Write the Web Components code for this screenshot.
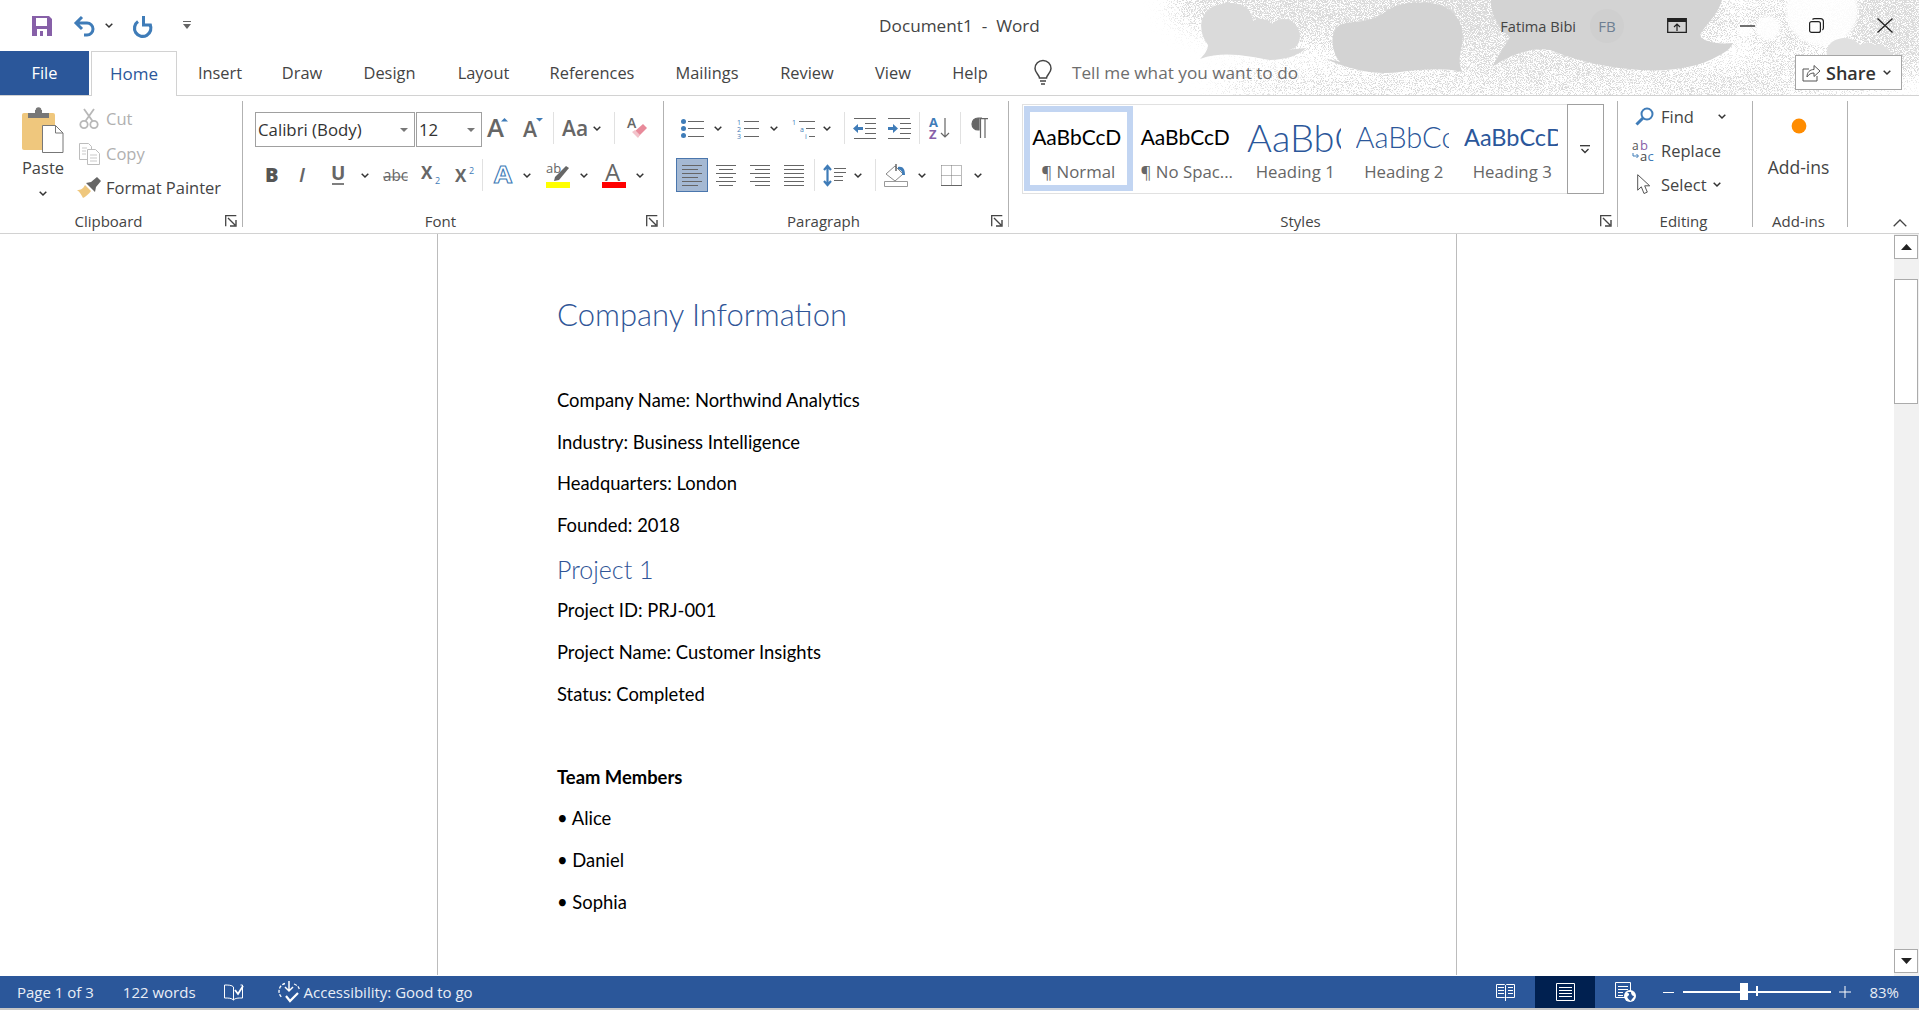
<!DOCTYPE html>
<html lang="en">
<head>
<meta charset="utf-8">
<title>Document1 - Word</title>
<style>
  html, body { margin: 0; height: 100%; overflow: hidden; background: #fff; }
  body { font-family: "Open Sans", "Noto Sans", sans-serif; }
</style>
</head>
<body>
<word-app>
  <word-titlebar slot="title"></word-titlebar>
  <word-tabs slot="tabs"></word-tabs>
  <word-ribbon slot="ribbon"></word-ribbon>
  <word-document slot="doc">
    <doc-line kind="title">Company Information</doc-line>
    <doc-line>Company Name: Northwind Analytics</doc-line>
    <doc-line>Industry: Business Intelligence</doc-line>
    <doc-line>Headquarters: London</doc-line>
    <doc-line>Founded: 2018</doc-line>
    <doc-line kind="head">Project 1</doc-line>
    <doc-line>Project ID: PRJ-001</doc-line>
    <doc-line>Project Name: Customer Insights</doc-line>
    <doc-line>Status: Completed</doc-line>
    <doc-line></doc-line>
    <doc-line kind="bold">Team Members</doc-line>
    <doc-line>• Alice</doc-line>
    <doc-line>• Daniel</doc-line>
    <doc-line>• Sophia</doc-line>
  </word-document>
  <word-statusbar slot="status"></word-statusbar>
</word-app>

<script>
const UI_FONT = `"Open Sans", "Noto Sans", sans-serif`;
const G = "#666";
const B = "#3f7cb8";
const chevPath = `<path d="M.7.7 4 4l3.3-3.3" fill="none" stroke="#333" stroke-width="1.5"/>`;
const lines = (x, w, ys, c = G) => ys.map(y => `<path d="M${x} ${y + .5}h${w}" stroke="${c}"/>`).join("");
const glyph = (x, y, size, weight, fill, txt, extra = "") =>
  `<text x="${x}" y="${y}" font-size="${size}" font-weight="${weight}" fill="${fill}" font-family='"Open Sans",sans-serif' ${extra}>${txt}</text>`;

// name: [width, height, markup]
const ICONS = {
  chev: [8, 5, chevPath],
  save: [20, 20, `<path fill="#8760a8" d="M0 0h17l3 3v17H0z"/><path fill="#fff" d="M4 2h11v8H4zM5 13h10v7H5z"/><path fill="#8760a8" d="M8 15h3v5H8z"/>`],
  undo: [22, 21, `<path d="M9 2 3 8l6 6M3 8h11a6 6 0 0 1 0 12h-3" fill="none" stroke="${B}" stroke-width="3"/>`],
  redo: [20, 20, `<path d="M6 5.500a8.200 8.200 0 1 0 12 3" fill="none" stroke="${B}" stroke-width="3.200"/><path d="M11.500 0v9H19.500" fill="none" stroke="${B}" stroke-width="3"/>`],
  qat: [8, 9, `<path d="M0 .5h8" stroke="#666"/><path fill="#666" d="M0 3h8L4 8z"/>`],
  bulb: [20, 24, `<path d="M6.500 17c0-3-4.500-5-4.500-9.500a8 8 0 0 1 16 0c0 4.500-4.500 6.500-4.500 9.500zM7 20h6M8 23h4" fill="none" stroke="#444" stroke-width="1.500"/>`],
  share: [19, 19, `<path d="M7 6H1v12h14v-5" fill="none" stroke="#555"/><path d="M5 14c0-5 3-7.500 7-7.500V2.500l6 5.500-6 5.500V10c-3 0-5 1-7 4z" fill="#fff" stroke="#555"/>`],
  ribbonDisplay: [20, 15, `<path d="M.7.7h18.600v13.600H.7z" fill="none" stroke="#222" stroke-width="1.300"/><path fill="#222" d="M1 1h18v3H1z"/><path d="M10 13V6.500M7 9l3-3 3 3" fill="none" stroke="#222" stroke-width="1.200"/>`],
  minimize: [15, 2, `<path d="M0 1h15" stroke="#222" stroke-width="1.300"/>`],
  restore: [15, 15, `<rect x=".6" y="3.600" width="10.800" height="10.800" rx="2" fill="none" stroke="#222" stroke-width="1.200"/><path d="M3.500 1.500c.5-.6 1-.9 2-.9h6c1.700 0 2.900 1.200 2.900 2.900v6.500c0 1-.4 1.500-1 2" fill="none" stroke="#222" stroke-width="1.200"/>`],
  close: [16, 15, `<path d="m.5.500 15 14M15.500.500l-15 14" stroke="#222" stroke-width="1.300"/>`],
  paste: [42, 46, `<rect y="6" width="33" height="37" rx="2" fill="#efc77d"/><path fill="#777" d="M6 6h21v5H6zM13 3h7v4h-7z"/><circle cx="16.500" cy="3" r="2.800" fill="#777"/><path d="M20.500 18.500h13l7.500 7.500v19.500H20.500z" fill="#fff" stroke="#777"/><path d="M33.500 18.500V26H41" fill="none" stroke="#777"/>`],
  cut: [20, 21, `<g fill="none" stroke="#b8b8b8" stroke-width="1.800"><circle cx="5" cy="16.500" r="3.700"/><circle cx="15" cy="16.500" r="3.700"/><path d="M6.500 13 15 1M13.500 13 5 1"/></g>`],
  copy: [21, 22, `<g fill="#fff" stroke="#bdbdbd"><path d="M.5.500h9l3 3v13H.5z"/><path d="M8.500 6.500h8l4 4v11h-12z"/></g><path d="M3 5h5M3 8h4M3 11h4M11 12h7M11 15h7M11 18h7" stroke="#c9c9c9"/>`],
  painter: [25, 21, `<path fill="#efc77d" d="M0 13c4 0 6-1 8-5l6 6c-2 3-6 6-8 7-1-2-3-6-6-8z"/><path fill="#666" d="m9 6 5-1 6-5 4 4-5 6-1 5z"/>`],
  launcher: [12, 12, `<path d="M.7 11.300V.700h10.600" fill="none" stroke="#444" stroke-width="1.300"/><path d="M3 3l7 7M11 5v6H5" fill="none" stroke="#444" stroke-width="1.400"/>`],
  grow: [24, 20, glyph(0, 19, 26, 600, G, "A", `textLength="17" lengthAdjust="spacingAndGlyphs"`) + `<path fill="${B}" d="M14 3.500 17.500 0 21 3.500z"/>`],
  shrink: [22, 20, glyph(0, 19, 21, 600, G, "A", `textLength="14" lengthAdjust="spacingAndGlyphs"`) + `<path fill="${B}" d="M13 0h7l-3.500 3.500z"/>`],
  changeCase: [25, 18, glyph(0, 17, 21, 600, G, "Aa")],
  eraser: [20, 22, glyph(0, 11, 14, 600, G, "A") + `<path fill="#e88a9a" d="m7 15 9-8 4 4-9 9z"/><path fill="#f3c3cb" d="m5 15 3-2 5 5-2 3z"/>`],
  bold: [14, 16, glyph(0, 15, 20, 800, "#555", "B")],
  italic: [12, 16, glyph(0, 15, 20, 600, "#666", "I", `font-style="italic"`)],
  underline: [14, 19, glyph(0, 14, 19, 700, "#666", "U") + `<path d="M1 18h12" stroke="#555" stroke-width="1.500"/>`],
  strike: [25, 15, glyph(0, 13, 16, 400, "#666", "abc", `textLength="25" lengthAdjust="spacingAndGlyphs"`) + `<path d="M0 9h25" stroke="#666"/>`],
  sub: [20, 18, glyph(0, 13, 17, 700, "#666", "X") + glyph(14, 18, 9, 400, B, "2")],
  sup: [20, 18, glyph(0, 16, 17, 700, "#666", "X") + glyph(14, 8, 9, 400, B, "2")],
  textEffect: [18, 18, glyph(0, 17, 23, 700, "#fff", "A", `stroke="${B}" stroke-width="1" textLength="18" lengthAdjust="spacingAndGlyphs"`)],
  highlight: [24, 25, glyph(0, 10, 13, 400, G, "ab") + `<path fill="${G}" d="m9 14 11-11 3 2-10 12-5 1z"/><path fill="#ff0" d="M0 19h24v6H0z"/>`],
  fontColor: [24, 25, glyph(3, 18, 24, 500, G, "A") + `<path fill="#f00" d="M0 19h24v6H0z"/>`],
  bullets: [23, 19, `<circle cx="2.500" cy="2.500" r="2.500" fill="${B}"/><circle cx="2.500" cy="9.500" r="2.500" fill="${B}"/><circle cx="2.500" cy="16.500" r="2.500" fill="${B}"/>` + lines(7, 16, [2, 9, 17])],
  numbered: [23, 19, glyph(0, 6, 7, 400, B, "1") + glyph(0, 13, 7, 400, B, "2") + glyph(0, 20, 7, 400, B, "3") + lines(7, 15, [2, 9, 17])],
  multilevel: [23, 19, glyph(0, 6, 7, 400, B, "1") + glyph(8, 13, 7, 400, B, "a") + glyph(13, 20, 7, 400, B, "i") + lines(7, 16, [2]) + lines(14, 9, [9]) + lines(17, 6, [17])],
  outdent: [23, 21, lines(1, 22, [0, 20]) + lines(12, 11, [5, 10, 15]) + `<path fill="${B}" d="M0 10.500 5 6v3h5v3H5v3z"/>`],
  indent: [23, 21, lines(0, 22, [0, 20]) + lines(12, 11, [5, 10, 15]) + `<path fill="${B}" d="M10 10.500 5 6v3H0v3h5v3z"/>`],
  sort: [23, 22, glyph(0, 10, 13, 700, B, "A") + glyph(0, 22, 13, 700, "#8760a8", "Z") + `<path d="M16 1v19M12 16l4 4 4-4" fill="none" stroke="#666" stroke-width="1.200"/>`],
  pilcrow: [16, 20, `<path d="M10 0H6a6 6 0 0 0 0 12h1V0zM8.500 0v20M13 0v20M8 .7h8" fill="#666" stroke="#666" stroke-width="1.200"/>`],
  alignLeft: [20, 21, lines(0, 20, [0, 8, 16]) + lines(0, 16, [4, 12, 20])],
  alignCenter: [20, 21, lines(0, 20, [0, 8, 16]) + lines(3, 14, [4, 12, 20])],
  alignRight: [20, 21, lines(0, 20, [0, 8, 16]) + lines(5, 15, [4, 12, 20])],
  justify: [20, 21, lines(0, 20, [0, 4, 8, 12, 16, 20])],
  lineSpacing: [23, 23, `<path d="M4.500 2v19M1 6l3.500-4L8 6M1 17l3.500 4L8 17" fill="none" stroke="${B}" stroke-width="2.200"/>` + lines(11, 12, [4, 8]) + lines(11, 9, [12, 16])],
  shading: [24, 24, `<path d="M2 11l9-8 8 8-8 7z" fill="#fff" stroke="#888"/><path d="M12 1v7" stroke="#666" stroke-width="1.500"/><path d="M14 4c5-1 7 2 7 8h-3c1-3-1-5-4-6z" fill="${B}"/><path d="M.5 18.500h23v5H.5z" fill="#fff" stroke="#999"/>`],
  borders: [21, 21, `<path d="M.5.500h20M.5 10.500h20M.5.500v20M10.500.500v20M20.500.500v20" fill="none" stroke="#777" stroke-dasharray="1 1"/><path d="M0 20.500h21" stroke="#666"/>`],
  find: [19, 19, `<circle cx="12" cy="7" r="5.500" fill="none" stroke="${B}" stroke-width="2"/><path d="M8 11 1.500 17.500" stroke="${B}" stroke-width="3"/>`],
  replace: [24, 20, glyph(0, 9, 12, 400, "#555", "a") + glyph(8, 9, 13, 500, "#8760a8", "b") + glyph(8, 20, 13, 400, "#444", "a") + glyph(15.500, 20, 13, 400, B, "c") + `<path d="M1 12v3h5M4.500 13l2 2-2 2" fill="none" stroke="${B}"/>`],
  select: [14, 22, `<path d="M.7.7v15.500l3.600-3.400L7 19.500l3.300-1.400-2.600-6.300h5z" fill="#fff" stroke="#555"/>`],
  dot: [16, 16, `<defs><filter id="soft"><feGaussianBlur stdDeviation=".5"/></filter></defs><circle cx="8" cy="8" r="7.400" fill="#ff8c00" filter="url(#soft)"/>`],
  collapse: [14, 8, `<path d="M.7 7.300 7 1l6.300 6.300" fill="none" stroke="#444" stroke-width="1.300"/>`],
  moreStyles: [10, 9, `<path d="M0 .7h10" stroke="#333" stroke-width="1.300"/><path d="m1.500 4 3.500 3.500L8.500 4" fill="none" stroke="#333" stroke-width="1.300"/>`],
  triDown: [8, 4, `<path fill="#777" d="M0 0h8L4 4z"/>`],
  scrollUp: [11, 6, `<path fill="#222" d="M0 6 5.500 0 11 6z"/>`],
  scrollDown: [11, 6, `<path fill="#222" d="M0 0h11L5.500 6z"/>`],
  proof: [20, 17, `<path d="M9.500 3C8 1 4 1 .5 1v13c4 0 7 0 9 2 2-2 4-2 9-2V1h-2M9.500 3v13" fill="none" stroke="#fff"/><path d="m11 6 3 4 5-8" fill="none" stroke="#fff" stroke-width="1.800"/>`],
  a11y: [23, 22, `<path d="M7 2.500a8 8 0 0 0-3 14M16 3c3 1 5 3 5.500 6" fill="none" stroke="#fff" stroke-width="1.300" stroke-dasharray="3 1.500"/><path d="M11 0v10M7 6l4 4 4-4" fill="none" stroke="#fff" stroke-width="1.500"/><path d="m8 15 4 5 8-8" fill="none" stroke="#fff" stroke-width="2.200"/>`],
  readMode: [19, 18, `<path d="M.5 1.500h8l1 1 1-1h8v13h-8l-1 1-1-1h-8zM9.500 2.500V18" fill="none" stroke="#fff"/>` + lines(2, 6, [4, 7, 10], "#fff") + lines(12, 5, [4, 7, 10], "#fff")],
  printLayout: [19, 18, `<path d="M.5.500h18v17H.5z" fill="none" stroke="#fff"/>` + lines(3, 13, [4, 7, 10, 13], "#fff")],
  webLayout: [21, 20, `<path d="M.5.500h15v15H.5z" fill="none" stroke="#fff"/>` + lines(3, 10, [4, 7], "#fff") + lines(3, 5, [10, 13], "#fff") + `<circle cx="15" cy="14" r="6" fill="#fff"/><path d="M12 10c2 1 3 3 1 4s1 4 3 5c0-2 3-3 3-5-2 0-3-2-3-4z" fill="#2b579a"/>`],
};

class ToolBtn extends HTMLElement {
  connectedCallback() {
    const name = this.getAttribute("name");
    const [w, h, body] = ICONS[name] || [0, 0, ""];
    const cell = this.getAttribute("w");
    const ml = this.getAttribute("ml") || 0;
    this.attachShadow({ mode: "open" }).innerHTML = `
      <style>
        :host {
          display: flex; align-items: center; justify-content: center; flex: none;
          ${cell ? `width: ${cell}px;` : ""} margin-left: ${ml}px;
          box-sizing: border-box;
        }
        :host([active]) { background: #a5b9d3; border: 1px solid #4a76ad; height: 34px; }
        svg { display: block; overflow: visible; }
      </style>
      <svg width="${w}" height="${h}" viewBox="0 0 ${w} ${h}">${body}</svg>`;
  }
}

class RbSep extends HTMLElement {
  constructor() {
    super();
    this.attachShadow({ mode: "open" }).innerHTML = `
      <style>:host { display: block; flex: none; width: 1px; height: 32px; background: #e1e1e1; }</style>`;
  }
}

class WordApp extends HTMLElement {
  constructor() {
    super();
    this.attachShadow({ mode: "open" }).innerHTML = `
      <style>
        :host {
          display: grid; position: relative; isolation: isolate;
          grid-template-rows: 51px 45px 138px 742px 34px;
          width: 1919px; height: 1010px; overflow: hidden; background: #fff;
        }
        .art { position: absolute; left: 1130px; top: 0; z-index: -1; display: block; }
      </style>
      <svg class="art" width="789" height="95" viewBox="1130 0 789 95">
        <defs>
          <filter id="speck" filterUnits="userSpaceOnUse" x="1130" y="0" width="789" height="95" color-interpolation-filters="sRGB">
            <feGaussianBlur in="SourceAlpha" stdDeviation="14" result="density"/>
            <feTurbulence type="fractalNoise" baseFrequency="1.15" numOctaves="2" seed="7"/>
            <feColorMatrix type="matrix" values="0 0 0 0 0  0 0 0 0 0  0 0 0 0 0  3.600 0 0 0 -1.300" result="noise"/>
            <feComposite in="density" in2="noise" operator="arithmetic" k1="0" k2="1" k3="1" k4="-1"/>
            <feComponentTransfer result="mask"><feFuncA type="linear" slope="2.500" intercept="0"/></feComponentTransfer>
            <feFlood flood-color="#dadada"/>
            <feComposite in2="mask" operator="in"/>
          </filter>
          <filter id="halo"><feGaussianBlur stdDeviation="1.500"/></filter>
        </defs>
        <g filter="url(#speck)">
          <ellipse cx="1360" cy="5" rx="190" ry="42" fill-opacity=".8"/>
          <ellipse cx="1560" cy="20" rx="180" ry="50" fill-opacity=".7"/>
          <ellipse cx="1500" cy="85" rx="290" ry="22" fill-opacity=".55"/>
          <ellipse cx="1790" cy="25" rx="50" ry="40" fill-opacity=".58"/>
          <ellipse cx="1900" cy="15" rx="60" ry="60" fill-opacity=".85"/>
          <ellipse cx="1780" cy="85" rx="120" ry="20" fill-opacity=".48"/>
        </g>
        <g fill="#fff" filter="url(#halo)" opacity=".9">
          <circle cx="1822" cy="10" r="36"/>
          <circle cx="1768" cy="28" r="12"/>
          <circle cx="1745" cy="30" r="7"/>
        </g>
        <g fill="#d3d3d3">
          <path fill="#dadada" d="M1208 45C1195 28 1200 5 1228 3c17-1 24 9 25 18 7-5 15-1 19 3 8-9 26-6 28 11 0 10-5 15-15 15l21-2c-6 7-21 12-36 12-20-3-45-10-70-1 4-4 8-9 8-14z"/>
          <path d="M1340 62c-10-12-10-32 0-37 10-5 30-1 45-13 10-9 35-12 55-7 20 7 25 25 22 40-2 10-4 17 0 27-17-4-37-3-62 0-20 3-45 0-74-13 6 1 11 2 14 3z"/>
          <path d="M1491 0c-1 15 9 30 19 37-7 11-13 21-18 30 18-12 38-20 58-17 30 12 60 18 90 20 30 2 60-3 78-14 8-4 13-8 15-13-18 2-33-3-33-8 5-10 18-20 22-35z"/>
          <path fill="#e0e0e0" d="M1827 56c-2-12 8-18 18-18 8 0 12 4 15 7 5-3 11-3 15 0 6-2 14 2 18 11z"/>
        </g>
      </svg>
      <slot name="title"></slot>
      <slot name="tabs"></slot>
      <slot name="ribbon"></slot>
      <slot name="doc"></slot>
      <slot name="status"></slot>`;
  }
}

class WordTitlebar extends HTMLElement {
  constructor() {
    super();
    this.attachShadow({ mode: "open" }).innerHTML = `
      <style>
        :host {
          display: grid; grid-template-columns: 1fr auto 1fr; align-items: center;
          height: 51px; font-family: ${UI_FONT}; color: #444; font-size: 14.6px;
        }
        .qat { display: flex; align-items: center; padding-left: 32px; height: 50px; }
        .doc { font-size: 17.2px; white-space: pre; }
        .right { display: flex; align-items: center; justify-content: flex-end; height: 50px; }
        .user { margin-right: 14px; }
        .avatar {
          width: 34px; height: 34px; border-radius: 50%; background: #cfcfcf;
          display: grid; place-items: center; color: #6e7f92; font-size: 15px;
          margin-right: 18px;
        }
      </style>
      <div class="qat">
        <tool-btn name="save"></tool-btn>
        <tool-btn name="undo" ml="21"></tool-btn>
        <tool-btn name="chev" ml="10"></tool-btn>
        <tool-btn name="redo" ml="19"></tool-btn>
        <tool-btn name="qat" ml="31"></tool-btn>
      </div>
      <div class="doc">Document1  -  Word</div>
      <div class="right">
        <span class="user">Fatima Bibi</span>
        <span class="avatar">FB</span>
        <tool-btn name="ribbonDisplay" w="70"></tool-btn>
        <tool-btn name="minimize" w="70"></tool-btn>
        <tool-btn name="restore" w="69"></tool-btn>
        <tool-btn name="close" w="68"></tool-btn>
      </div>`;
  }
}

class WordTabs extends HTMLElement {
  constructor() {
    super();
    const tabs = [["Insert", 84], ["Draw", 80], ["Design", 95], ["Layout", 93], ["References", 124],
      ["Mailings", 106], ["Review", 94], ["View", 78], ["Help", 76]];
    this.attachShadow({ mode: "open" }).innerHTML = `
      <style>
        :host {
          display: flex; height: 45px; box-sizing: border-box; align-items: stretch;
          border-bottom: 1px solid #d2d2d2; font-family: ${UI_FONT}; font-size: 16.4px; color: #444;
        }
        .tab { display: grid; place-items: center; flex: none; box-sizing: border-box; padding-bottom: 1px; }
        .file { width: 89px; background: #2b579a; color: #fff; margin-right: 2px; }
        .home {
          width: 86px; height: 45px; color: #2b579a; background: #fff; font-size: 17px;
          border: 1px solid #d2d2d2; border-bottom: 0; margin-right: 1px;
        }
        .tell { display: flex; align-items: center; margin-left: 25px; color: #6d6d6d; font-size: 17.2px; padding-bottom: 1px; }
        .tell span { margin-left: 19px; }
        .share {
          margin: 4px 17px 5px auto; width: 107px; box-sizing: border-box; border: 1px solid #a5a5a5;
          display: flex; align-items: center; padding-left: 6px; background: #fff;
          font-weight: 600; font-size: 18px; color: #333;
        }
        .share span { margin: 0 7px 0 5px; }
      </style>
      <div class="tab file">File</div>
      <div class="tab home">Home</div>
      ${tabs.map(([t, w]) => `<div class="tab" style="width:${w}px">${t}</div>`).join("")}
      <div class="tell"><tool-btn name="bulb"></tool-btn><span>Tell me what you want to do</span></div>
      <div class="share"><tool-btn name="share"></tool-btn><span>Share</span><tool-btn name="chev"></tool-btn></div>`;
  }
}

class RibbonGroup extends HTMLElement {
  constructor() {
    super();
    this.attachShadow({ mode: "open" }).innerHTML = `
      <style>
        :host {
          display: grid; grid-template-rows: 112px 14px; flex: none; box-sizing: border-box;
          height: 126px; margin-top: 5px; border-right: 1px solid #b2b2b2;
          font-family: ${UI_FONT}; color: #444;
        }
        .foot { display: flex; align-items: center; height: 16px; font-size: 15px; }
        .label { flex: 1; text-align: center; }
        :host([launcher]) .foot tool-btn { width: 25px; justify-content: flex-end; padding-right: 5px; box-sizing: border-box; }
        :host(:not([launcher])) .foot tool-btn { display: none; }
        :host(:not([launcher])) .foot { padding-right: 3px; }
      </style>
      <div><slot></slot></div>
      <div class="foot"><span class="label"></span><tool-btn name="launcher"></tool-btn></div>`;
  }
  connectedCallback() {
    this.style.width = this.getAttribute("w") + "px";
    this.shadowRoot.querySelector(".label").textContent = this.getAttribute("label");
  }
}

class ToolRows extends HTMLElement {
  constructor() {
    super();
    this.attachShadow({ mode: "open" }).innerHTML = `
      <style>
        :host { display: grid; grid-template-rows: 40px 40px; row-gap: 7px; padding: 7px 0 0 12px; }
        ::slotted(div) { display: flex; align-items: center; }
      </style>
      <slot></slot>`;
  }
}

class FontBox extends HTMLElement {
  constructor() {
    super();
    this.attachShadow({ mode: "open" }).innerHTML = `
      <style>
        :host {
          display: flex; align-items: center; flex: none; box-sizing: border-box; height: 35px;
          border: 1px solid #a0a0a0; padding: 0 6px 0 2px; font-size: 16.8px; color: #333;
          font-family: ${UI_FONT}; margin-top: 3px;
        }
        span { flex: 1; }
      </style>
      <span><slot></slot></span><tool-btn name="triDown"></tool-btn>`;
  }
  connectedCallback() { this.style.width = this.getAttribute("w") + "px"; }
}

class StyleCard extends HTMLElement {
  constructor() {
    super();
    this.attachShadow({ mode: "open" }).innerHTML = `
      <style>
        :host {
          display: grid; grid-template-rows: 50px 1fr; flex: none; box-sizing: border-box;
          width: 108.500px; height: 85px; border: 6px solid transparent; overflow: hidden; text-align: center;
        }
        :host([selected]) { border-color: #c2d5f2; }
        .sample {
          display: block; align-self: center; white-space: nowrap; overflow: hidden; margin: 0 3px 0 0;
          font-family: Lato, sans-serif; font-size: var(--size, 21px); font-weight: var(--weight, 400);
          color: var(--color, #000); line-height: 50px;
        }
        .name { font-family: ${UI_FONT}; font-size: 16.8px; color: #666; white-space: nowrap; line-height: 24px; margin: -2px -6px 0; }
      </style>
      <span class="sample"></span>
      <span class="name"><slot></slot></span>`;
  }
  connectedCallback() {
    this.shadowRoot.querySelector(".sample").textContent = this.getAttribute("sample");
  }
}

class WordRibbon extends HTMLElement {
  constructor() {
    super();
    this.attachShadow({ mode: "open" }).innerHTML = `
      <style>
        :host {
          display: flex; height: 138px; box-sizing: border-box; background: #fff;
          border-bottom: 1px solid #d2d2d2; font-family: ${UI_FONT}; color: #444; font-size: 16.5px;
        }
        .clip { display: flex; }
        .paste { display: flex; flex-direction: column; align-items: center; width: 70px; margin-left: 8px; padding-top: 6px; box-sizing: border-box; }
        .paste span { margin: 5px 0 13px; line-height: 20px; }
        .clip-col { display: grid; grid-template-rows: 34px 37px 31px; }
        .row { display: flex; align-items: center; white-space: nowrap; }
        .dim { color: #b0b0b0; }
        .clip-col .row tool-btn:first-child { width: 22px; margin-right: 6px; }
        .gallery {
          display: flex; box-sizing: border-box; width: 579px; height: 90px; margin: 3px 0 0 13px;
          border: 1px solid #e1e1e1; padding: 1px 0 0 1px;
        }
        .more {
          margin-left: auto; width: 37px; height: 90px; margin-top: -2px; margin-right: -1px; box-sizing: border-box;
          border: 1px solid #a0a0a0; display: grid; place-items: center; background: #fff; flex: none;
        }
        .edit { display: grid; grid-template-rows: 31px 37px 31px; }
        .edit .row { padding-left: 12px; }
        .edit .row tool-btn:first-child { width: 28px; margin-right: 3px; }
        .addin { display: flex; flex-direction: column; align-items: center; padding: 17px 3px 0 0; font-size: 17.5px; box-sizing: border-box; }
        .addin span { margin-top: 21px; }
        .collapse { margin: auto 12px 6px auto; }
      </style>
      <ribbon-group label="Clipboard" launcher w="243">
        <div class="clip">
          <div class="paste"><tool-btn name="paste"></tool-btn><span>Paste</span><tool-btn name="chev"></tool-btn></div>
          <div class="clip-col">
            <div class="row dim"><tool-btn name="cut"></tool-btn>Cut</div>
            <div class="row dim"><tool-btn name="copy"></tool-btn>Copy</div>
            <div class="row"><tool-btn name="painter"></tool-btn>Format Painter</div>
          </div>
        </div>
      </ribbon-group>

      <ribbon-group label="Font" launcher w="421">
        <tool-rows>
          <div>
            <font-box w="160">Calibri (Body)</font-box>
            <font-box w="66" style="margin-left:1px">12</font-box>
            <tool-btn name="grow" w="33"></tool-btn>
            <tool-btn name="shrink" w="38"></tool-btn>
            <rb-sep></rb-sep>
            <tool-btn name="changeCase" w="40"></tool-btn>
            <tool-btn name="chev" w="6"></tool-btn>
            <rb-sep style="margin-left:14px"></rb-sep>
            <tool-btn name="eraser" w="44"></tool-btn>
          </div>
          <div>
            <tool-btn name="bold" w="33"></tool-btn>
            <tool-btn name="italic" w="33"></tool-btn>
            <tool-btn name="underline" w="34"></tool-btn>
            <tool-btn name="chev" w="20"></tool-btn>
            <tool-btn name="strike" w="40"></tool-btn>
            <tool-btn name="sub" w="32"></tool-btn>
            <tool-btn name="sup" w="35"></tool-btn>
            <rb-sep></rb-sep>
            <tool-btn name="textEffect" w="40"></tool-btn>
            <tool-btn name="chev" w="7"></tool-btn>
            <tool-btn name="highlight" w="44" ml="6"></tool-btn>
            <tool-btn name="chev" w="8"></tool-btn>
            <tool-btn name="fontColor" w="44" ml="4"></tool-btn>
            <tool-btn name="chev" w="8"></tool-btn>
          </div>
        </tool-rows>
      </ribbon-group>

      <ribbon-group label="Paragraph" launcher w="345">
        <tool-rows>
          <div>
            <tool-btn name="bullets" w="32"></tool-btn>
            <tool-btn name="chev" w="20"></tool-btn>
            <tool-btn name="numbered" w="40"></tool-btn>
            <tool-btn name="chev" w="12"></tool-btn>
            <tool-btn name="multilevel" w="39" ml="4"></tool-btn>
            <tool-btn name="chev" w="7"></tool-btn>
            <rb-sep style="margin-left:14px"></rb-sep>
            <tool-btn name="outdent" w="39"></tool-btn>
            <tool-btn name="indent" w="30"></tool-btn>
            <rb-sep style="margin-left:5px"></rb-sep>
            <tool-btn name="sort" w="40"></tool-btn>
            <rb-sep></rb-sep>
            <tool-btn name="pilcrow" w="38"></tool-btn>
          </div>
          <div>
            <tool-btn name="alignLeft" w="32" active></tool-btn>
            <tool-btn name="alignCenter" w="20" ml="8"></tool-btn>
            <tool-btn name="alignRight" w="20" ml="14"></tool-btn>
            <tool-btn name="justify" w="20" ml="14"></tool-btn>
            <rb-sep style="margin-left:10px"></rb-sep>
            <tool-btn name="lineSpacing" w="39"></tool-btn>
            <tool-btn name="chev" w="7"></tool-btn>
            <rb-sep style="margin-left:14px"></rb-sep>
            <tool-btn name="shading" w="40"></tool-btn>
            <tool-btn name="chev" w="8" ml="2"></tool-btn>
            <tool-btn name="borders" w="43" ml="4"></tool-btn>
            <tool-btn name="chev" w="9"></tool-btn>
          </div>
        </tool-rows>
      </ribbon-group>

      <ribbon-group label="Styles" launcher w="609">
        <div class="gallery">
          <style-card selected sample="AaBbCcD">¶ Normal</style-card>
          <style-card sample="AaBbCcD">¶ No Spac...</style-card>
          <style-card sample="AaBbCcDd" style="--size:38px;--weight:300;--color:#2b579a">Heading 1</style-card>
          <style-card sample="AaBbCcDd" style="--size:29px;--weight:300;--color:#2b579a">Heading 2</style-card>
          <style-card sample="AaBbCcDd" style="--size:23.500px;--color:#2b579a">Heading 3</style-card>
          <div class="more"><tool-btn name="moreStyles"></tool-btn></div>
        </div>
      </ribbon-group>

      <ribbon-group label="Editing" w="135">
        <div class="edit">
          <div class="row"><tool-btn name="find"></tool-btn>Find<tool-btn name="chev" ml="24"></tool-btn></div>
          <div class="row"><tool-btn name="replace"></tool-btn>Replace</div>
          <div class="row"><tool-btn name="select"></tool-btn>Select<tool-btn name="chev" ml="6"></tool-btn></div>
        </div>
      </ribbon-group>

      <ribbon-group label="Add-ins" w="95">
        <div class="addin"><tool-btn name="dot"></tool-btn><span>Add-ins</span></div>
      </ribbon-group>

      <tool-btn class="collapse" name="collapse"></tool-btn>`;
  }
}

class WordScrollbar extends HTMLElement {
  constructor() {
    super();
    this.attachShadow({ mode: "open" }).innerHTML = `
      <style>
        :host {
          display: flex; flex-direction: column; width: 25px; height: 742px; flex: none;
          background: #f1f1f1; box-sizing: border-box; padding: 1px 1px 3px 0;
        }
        .btn, .thumb { background: #fff; border: 1px solid #ababab; box-sizing: border-box; display: grid; place-items: center; }
        .btn { height: 24px; }
        .thumb { height: 125px; margin-top: 20px; }
        .down { margin-top: auto; }
      </style>
      <div class="btn"><tool-btn name="scrollUp"></tool-btn></div>
      <div class="thumb"></div>
      <div class="btn down"><tool-btn name="scrollDown"></tool-btn></div>`;
  }
}

class WordDocument extends HTMLElement {
  constructor() {
    super();
    this.attachShadow({ mode: "open" }).innerHTML = `
      <style>
        :host { display: flex; height: 742px; background: #fff; overflow: hidden; }
        .area { flex: 1; padding-left: 437px; }
        .page {
          width: 1020px; height: 741px; box-sizing: border-box; padding: 50px 0 0 119px;
          border: solid #bcbcbc; border-width: 0 1px;
        }
      </style>
      <div class="area"><div class="page"><slot></slot></div></div>
      <word-scrollbar></word-scrollbar>`;
  }
}

class DocLine extends HTMLElement {
  constructor() {
    super();
    this.attachShadow({ mode: "open" }).innerHTML = `
      <style>
        :host {
          display: block; font-family: Lato, sans-serif; font-size: 18.400px; color: #000;
          line-height: 41.600px; height: 41.600px; white-space: nowrap;
        }
        :host([kind="title"]) {
          font-size: 31px; font-weight: 300; color: #2f5597; line-height: 60px; height: 60px; margin-bottom: 36px;
        }
        :host([kind="head"]) {
          font-size: 25px; font-weight: 300; color: #2f5597; line-height: 40px; height: 41px; padding-top: 3px;
        }
        :host([kind="bold"]) { font-weight: 700; }
      </style>
      <slot></slot>`;
  }
}

class ZoomSlider extends HTMLElement {
  constructor() {
    super();
    this.attachShadow({ mode: "open" }).innerHTML = `
      <style>
        :host { display: block; position: relative; width: 148px; height: 2px; background: #fff; flex: none; }
        i { position: absolute; background: #fff; display: block; }
        .tick { left: 73px; top: -5px; width: 2px; height: 10px; }
        .thumb { left: 57px; top: -8px; width: 8px; height: 17px; }
      </style>
      <i class="tick"></i><i class="thumb"></i>`;
  }
}

class WordStatusbar extends HTMLElement {
  constructor() {
    super();
    this.attachShadow({ mode: "open" }).innerHTML = `
      <style>
        :host {
          display: flex; align-items: center; box-sizing: border-box; height: 34px;
          background: #2b579a; border-bottom: 2px solid #c6c6c6;
          font-family: ${UI_FONT}; font-size: 15px; color: #e9eef6;
        }
        .page { margin-left: 17px; }
        .words { margin-left: 29px; }
        .right { margin-left: auto; display: flex; align-items: center; height: 32px; }
        .view { width: 60px; height: 32px; display: grid; place-items: center; }
        .view.on { background: #002050; }
        .pct { margin: 0 20px 0 18px; }
      </style>
      <span class="page">Page 1 of 3</span>
      <span class="words">122 words</span>
      <tool-btn name="proof" ml="28"></tool-btn>
      <tool-btn name="a11y" ml="34"></tool-btn>
      <span style="margin-left:3px">Accessibility: Good to go</span>
      <div class="right">
        <div class="view"><tool-btn name="readMode"></tool-btn></div>
        <div class="view on"><tool-btn name="printLayout"></tool-btn></div>
        <div class="view"><tool-btn name="webLayout"></tool-btn></div>
        <svg width="11" height="11" style="margin-left:8px" viewBox="0 0 11 11"><path d="M0 5.500h11" stroke="#fff"/></svg>
        <zoom-slider style="margin-left:9px"></zoom-slider>
        <svg width="12" height="12" style="margin-left:8px" viewBox="0 0 12 12"><path d="M0 6h12M6 0v12" stroke="#fff"/></svg>
        <span class="pct">83%</span>
      </div>`;
  }
}

[["tool-btn", ToolBtn], ["rb-sep", RbSep], ["font-box", FontBox], ["style-card", StyleCard],
 ["tool-rows", ToolRows], ["ribbon-group", RibbonGroup], ["word-titlebar", WordTitlebar],
 ["word-tabs", WordTabs], ["word-ribbon", WordRibbon], ["word-scrollbar", WordScrollbar],
 ["doc-line", DocLine], ["word-document", WordDocument], ["zoom-slider", ZoomSlider],
 ["word-statusbar", WordStatusbar], ["word-app", WordApp]].forEach(([n, c]) => customElements.define(n, c));
</script>
</body>
</html>
